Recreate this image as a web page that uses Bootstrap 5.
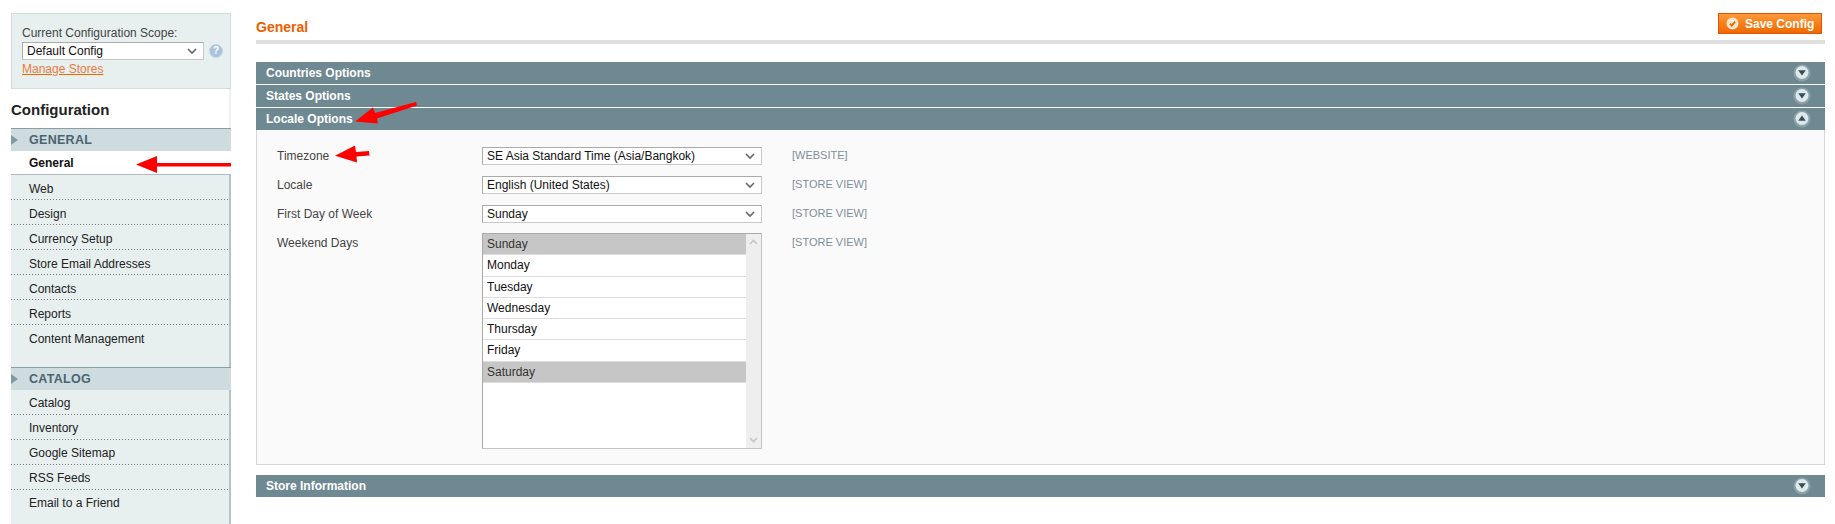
<!DOCTYPE html>
<html lang="en">
<head>
<meta charset="utf-8">
<title>Configuration</title>
<link href="https://cdn.jsdelivr.net/npm/bootstrap@5.3.0/dist/css/bootstrap.min.css" rel="stylesheet">
<style>
html,body{height:524px;overflow:hidden}
body{font-family:"Liberation Sans",Arial,sans-serif;font-size:12px;line-height:15px;color:#2f2f2f;background:#fff;position:relative}
.shell{padding:13px 10px 0 11px;gap:25px;height:524px}
.side{width:220px;flex:none}
.scope{height:76px;background:#e7efef;border:1px solid #d1dcdc;padding:12px 0 0 10px;color:#444}
.scope-row{height:18px;margin-top:1px;gap:5px}
.sel{appearance:none;background:#fff url("data:image/svg+xml,%3Csvg xmlns='http://www.w3.org/2000/svg' width='12' height='8'%3E%3Cpath d='M2 2l4 4 4-4' fill='none' stroke='%23666' stroke-width='1.6'/%3E%3C/svg%3E") no-repeat right 5px center;border:1px solid #aaa;border-right-color:#c8c8c8;border-bottom-color:#c8c8c8;font:12px/16px "Liberation Sans",Arial,sans-serif;color:#111;padding:0 4px;height:18px;border-radius:0;display:block;outline:0}
.sel-scope{width:182px}
.hint{width:14px;height:14px;border-radius:50%;background:#a9c3dc;border:1px solid #c5d6e6;color:#fff;font:bold 10px/12px "Liberation Sans",sans-serif;text-align:center}
.stores{display:block;color:#ee7a3a;margin-top:2px;text-decoration:underline;text-decoration-color:#ea6a00}
.conf-head{height:39px;padding-top:12px;font-size:15px;line-height:18px;font-weight:700;color:#222;border-right:2px solid #eef0f0}
.grp{height:23px;background:#cfdcdf;border-top:1px solid #8a9ea5;color:#4a6470;font-weight:700;font-size:12.5px;line-height:22px;padding-left:18px;position:relative;letter-spacing:.3px;width:220px}
.grp::before{content:"";position:absolute;left:0;top:6px;border-left:7px solid #7f9aa3;border-top:5px solid transparent;border-bottom:5px solid transparent}
.items{background:#e7efef;border-right:2px solid #b5c3c5;width:220px;margin:0;padding:0;list-style:none}
.itm{height:25px;padding:6px 0 0 18px;line-height:15px;color:#222;background:linear-gradient(to right,#6f7a7a 1px,transparent 1px) left bottom/3px 1px repeat-x}
.items-first .itm{padding-top:7px}
.itm:last-child{background:none}
.items-first .itm.on{height:24px;padding-top:5px;background:#fff;font-weight:700;color:#111;border-bottom:1px solid #aebcbf;margin-right:-2px}
.gap-tail{height:42px}
.items-last{height:134px}
.main{width:1569px;flex:none}
.page-ttl{height:31px;border-bottom:4px solid #dfdfdf;color:#eb5e00;font-size:14px;font-weight:700;line-height:18px;padding-top:5px}
.save{width:104px;height:21px;margin-right:3px;background:linear-gradient(#fc9a3c,#f77c16 55%,#ee6a00);border:1px solid #de5400;color:#fff;font-weight:700;font-size:12px;line-height:18px;border-radius:0;padding:0 0 0 7px;gap:6px}
.heading-row{margin-bottom:18px}
.sect{height:22px;background:#6f8992;color:#fff;font-weight:700;font-size:12px;line-height:21px;padding:0 14px 0 10px;margin-bottom:1px}
.tgl{flex:none}
.panel{height:335px;background:#fafafa;border:1px solid #d6d6d6;border-top:0;margin-top:-1px;margin-bottom:10px;padding:17px 0 0 20px;position:relative}
.frow{height:29px}
.flab{width:205px;line-height:16px;color:#444;flex:none;padding-top:1px}
.fld{width:280px;flex:none}
.fscope{margin-left:30px;color:#7f8e98;font-size:11px;line-height:15px;padding-top:1px}
.listbox{height:216px;width:280px;background:#fff;border:1px solid #aaa;border-right-color:#c4c4c4;border-bottom-color:#c4c4c4;margin-top:-1px}
.opts{flex:1;margin:0;padding:0;list-style:none}
.opt{height:21.3px;line-height:20px;padding-left:4px;color:#111;border-bottom:1px solid #ddd;font-size:12px}
.opt.sel-on{background:#c6c6c6;color:#333}
.track{width:15px;background:#eee;padding:5px 0}
.arrows{position:absolute;left:0;top:0;pointer-events:none}
</style>
</head>
<body>
<div class="d-flex shell">
  <aside class="side">
    <div class="scope">
      <div>Current Configuration Scope:</div>
      <div class="d-flex align-items-center scope-row">
        <select class="sel sel-scope"><option>Default Config</option></select>
        <span class="hint">?</span>
      </div>
      <a class="stores" href="#">Manage Stores</a>
    </div>
    <div class="conf-head">Configuration</div>
    <div class="grp">GENERAL</div>
    <ul class="items items-first">
      <li class="itm on">General</li>
      <li class="itm">Web</li>
      <li class="itm">Design</li>
      <li class="itm">Currency Setup</li>
      <li class="itm">Store Email Addresses</li>
      <li class="itm">Contacts</li>
      <li class="itm">Reports</li>
      <li class="itm gap-tail">Content Management</li>
    </ul>
    <div class="grp">CATALOG</div>
    <ul class="items items-last">
      <li class="itm">Catalog</li>
      <li class="itm">Inventory</li>
      <li class="itm">Google Sitemap</li>
      <li class="itm">RSS Feeds</li>
      <li class="itm">Email to a Friend</li>
    </ul>
  </aside>
  <main class="main">
    <div class="d-flex justify-content-end position-relative heading-row">
      <div class="page-ttl flex-grow-1">General</div>
      <button class="btn save d-flex align-items-center position-absolute top-0 end-0" type="button">
        <svg width="13" height="13" viewBox="0 0 13 13"><circle cx="6.5" cy="6.5" r="6" fill="#ffe8cf"/><path d="M3.8 6.600l2 2 3.400-4" fill="none" stroke="#ee6a00" stroke-width="1.800"/></svg>
        <span>Save Config</span>
      </button>
    </div>
    <div class="sect d-flex justify-content-between align-items-center"><span>Countries Options</span><svg class="tgl" width="18" height="18" viewBox="0 0 18 18"><circle cx="9" cy="9" r="8.500" fill="#8ba2aa"/><circle cx="9" cy="8.500" r="6.500" fill="#dfe8ea"/><path d="M5.200 6.200h7.600L9 11.500z" fill="#2f4f5c"/></svg></div>
    <div class="sect d-flex justify-content-between align-items-center"><span>States Options</span><svg class="tgl" width="18" height="18" viewBox="0 0 18 18"><circle cx="9" cy="9" r="8.500" fill="#8ba2aa"/><circle cx="9" cy="8.500" r="6.500" fill="#dfe8ea"/><path d="M5.200 6.200h7.600L9 11.500z" fill="#2f4f5c"/></svg></div>
    <div class="sect d-flex justify-content-between align-items-center"><span>Locale Options</span><svg class="tgl" width="18" height="18" viewBox="0 0 18 18"><circle cx="9" cy="9" r="8.500" fill="#8ba2aa"/><circle cx="9" cy="8.500" r="6.500" fill="#dfe8ea"/><path d="M5.200 10.800h7.600L9 5.500z" fill="#2f4f5c"/></svg></div>
    <div class="panel">
      <div class="d-flex frow">
        <div class="flab">Timezone</div>
        <div class="fld"><select class="sel w-100"><option>SE Asia Standard Time (Asia/Bangkok)</option></select></div>
        <div class="fscope">[WEBSITE]</div>
      </div>
      <div class="d-flex frow">
        <div class="flab">Locale</div>
        <div class="fld"><select class="sel w-100"><option>English (United States)</option></select></div>
        <div class="fscope">[STORE VIEW]</div>
      </div>
      <div class="d-flex frow">
        <div class="flab">First Day of Week</div>
        <div class="fld"><select class="sel w-100"><option>Sunday</option></select></div>
        <div class="fscope">[STORE VIEW]</div>
      </div>
      <div class="d-flex">
        <div class="flab">Weekend Days</div>
        <div class="listbox d-flex">
          <ul class="opts">
            <li class="opt sel-on">Sunday</li>
            <li class="opt">Monday</li>
            <li class="opt">Tuesday</li>
            <li class="opt">Wednesday</li>
            <li class="opt">Thursday</li>
            <li class="opt">Friday</li>
            <li class="opt sel-on">Saturday</li>
          </ul>
          <div class="track d-flex flex-column justify-content-between align-items-center">
            <svg width="9" height="6" viewBox="0 0 9 6"><path d="M1 5l3.500-3.500L8 5" fill="none" stroke="#c4c4c4" stroke-width="1.600"/></svg>
            <svg width="9" height="6" viewBox="0 0 9 6"><path d="M1 1l3.500 3.500L8 1" fill="none" stroke="#c4c4c4" stroke-width="1.600"/></svg>
          </div>
        </div>
        <div class="fscope">[STORE VIEW]</div>
      </div>
    </div>
    <div class="sect d-flex justify-content-between align-items-center"><span>Store Information</span><svg class="tgl" width="18" height="18" viewBox="0 0 18 18"><circle cx="9" cy="9" r="8.500" fill="#8ba2aa"/><circle cx="9" cy="8.500" r="6.500" fill="#dfe8ea"/><path d="M5.200 6.200h7.600L9 11.500z" fill="#2f4f5c"/></svg></div>
  </main>
</div>
<svg class="arrows" width="1835" height="524" viewBox="0 0 1835 524">
  <path d="M136 164.500L157 156v7h74v3.500h-74V173z" fill="#f00"/>
  <path d="M355 121.500L373 107.500l2 5.500 41-11 1 3.500-40 13 1 5z" fill="#f00"/>
  <path d="M335 155.700L355 145.500l1 6.500 13-1 .5 4.500-13 1 .5 6z" fill="#f00"/>
</svg>
</body>
</html>
